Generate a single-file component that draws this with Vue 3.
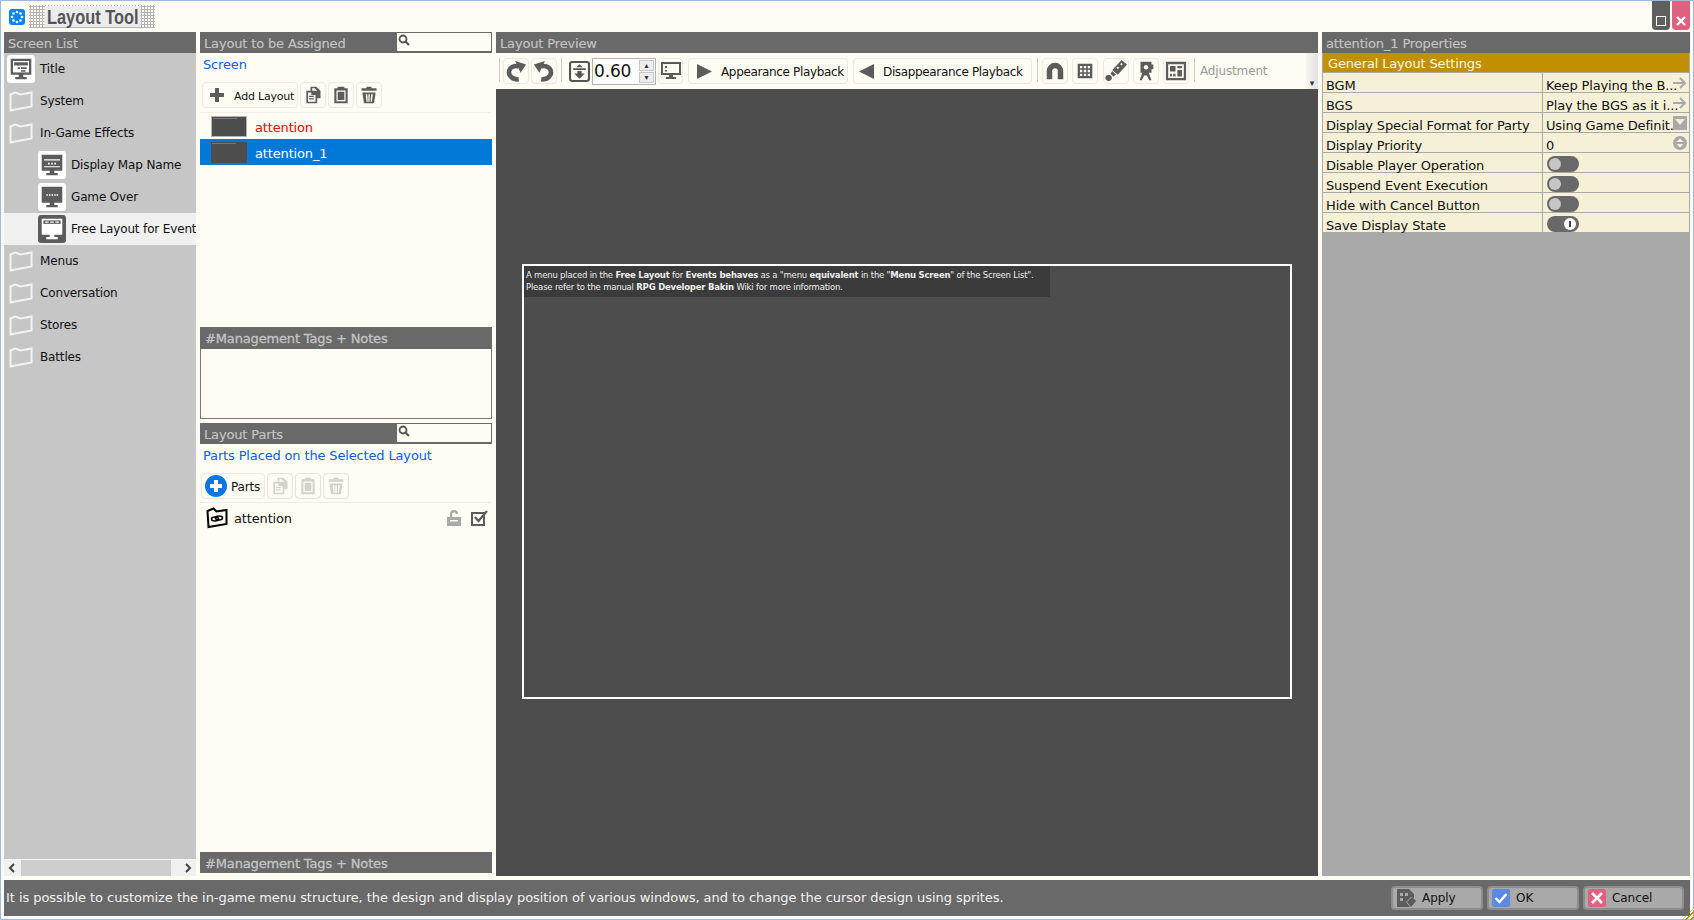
<script setup>
// Layout Tool window: screen list, layouts, preview, properties
const mon = 'M3 3h18v14h-7v2h3v2H7v-2h3v-2H3z'
const icons = {
  copy: 'M9 2h7l5 5v9h-4v6H4V7h5zM11 4v3h6v0l-3-3zM6 9v11h9V12h-5V9zM7 13h6v1.500H7zM7 16h6v1.500H7z',
  paste: 'M8 2h8v2h4v18H4V4h4zM6.500 6.500v13h11v-13z M8 8h8v10H8z',
  trash: 'M9 2h6v2h6v3H3V4h6zM4 9h16l-2 13H6zM8 11l1 9h1.500l-.5-9zM11.200 11v9h1.600v-9zM14.500 11l-.5 9h1.500l1-9z',
  magnet: 'M3 21V12a9 9 0 0 1 18 0v9h-6v-9a3 3 0 0 0-6 0v9z',
  grid: 'M4 4h16v16H4zM6.500 6.500v2.500H9V6.500zM10.700 6.500v2.500h2.600V6.500zM15 6.500v2.500h2.500V6.500zM6.500 10.700v2.600H9v-2.600zM10.700 10.700v2.600h2.600v-2.600zM15 10.700v2.600h2.500v-2.600zM6.500 15v2.500H9V15zM10.700 15v2.500h2.600V15zM15 15v2.500h2.500V15z',
  brush: 'M18 0l6 5-10 11-6-5zM18 3l-1.500 1.500 1.500 1.500 1.500-1.500zM14 7l-1.500 1.500 1.500 1.500 1.500-1.500zM8 12l4 4-3 2-3-3zM4 16a3.500 3.500 0 1 1-.1 0z',
  cam: 'M6 2h12v3h2v5h-2v4h-3l3 8h-2.500l-2.500-5h-3l-2.500 5H5l3-8H6zM12 5.500a2.500 2.500 0 1 0 .1 0z',
  layout: 'M1 2h22v20H1zM3.500 4.500v15h17v-15zM5.500 6.500h6v6h-6zM13.500 6.500h5v2.500h-5zM13.500 11h5v7h-5zM5.500 15h2v3h-2zM9 15h2.500v3H9z',
}
const screens = [
  { name: 'Title', kind: 'title' },
  { name: 'System', kind: 'folder' },
  { name: 'In-Game Effects', kind: 'folder' },
  { name: 'Display Map Name', kind: 'map', sub: true },
  { name: 'Game Over', kind: 'over', sub: true },
  { name: 'Free Layout for Events', kind: 'free', sub: true, active: true },
  { name: 'Menus', kind: 'folder' },
  { name: 'Conversation', kind: 'folder' },
  { name: 'Stores', kind: 'folder' },
  { name: 'Battles', kind: 'folder' },
]
const props = [
  { label: 'BGM', value: 'Keep Playing the B...', icon: 'arrow' },
  { label: 'BGS', value: 'Play the BGS as it i...', icon: 'arrow' },
  { label: 'Display Special Format for Party', value: 'Using Game Definit...', icon: 'drop' },
  { label: 'Display Priority', value: '0', icon: 'spin' },
  { label: 'Disable Player Operation', toggle: 'off' },
  { label: 'Suspend Event Execution', toggle: 'off' },
  { label: 'Hide with Cancel Button', toggle: 'off' },
  { label: 'Save Display State', toggle: 'on' },
]
</script>

<template>
  <div class="app">
    <header class="titlebar">
      <svg class="logo" viewBox="0 0 16 16">
        <rect width="16" height="16" rx="3" fill="#0a84f0" />
        <g fill="#fff">
          <circle cx="8" cy="3" r="1.300" /><circle cx="8" cy="13" r="1.300" />
          <circle cx="3" cy="8" r="1.300" /><circle cx="13" cy="8" r="1.300" />
          <circle cx="4.500" cy="4.500" r="1.300" /><circle cx="11.500" cy="4.500" r="1.300" />
          <circle cx="4.500" cy="11.500" r="1.300" /><circle cx="11.500" cy="11.500" r="1.300" />
        </g>
      </svg>
      <div class="app-title"><span>Layout Tool</span></div>
      <div class="win-btns">
        <div class="win-btn max"><i></i></div>
        <div class="win-btn close">
          <svg viewBox="0 0 10 10" width="10" height="10"><path d="M1 1l8 8M9 1l-8 8" stroke="#fff" stroke-width="2.400" /></svg>
        </div>
      </div>
    </header>

    <main class="main">
      <section class="col-screens">
        <div class="head">Screen List</div>
        <div class="screen-list">
          <div v-for="s in screens" :key="s.name" class="screen" :class="{ sub: s.sub, active: s.active, top: s.kind === 'title' }">
            <svg v-if="s.kind === 'folder'" class="folder" viewBox="0 0 24 22">
              <path d="M1.500 4.500l5-2 5 2 11-2v14l-11 2-10 2z" fill="none" stroke="#f2f2f2" stroke-width="2" />
            </svg>
            <div v-else class="mon-box" :class="{ dark: s.active }">
              <svg viewBox="1.500 1.500 21 21" width="24" height="24">
                <path :d="mon" :fill="s.active ? '#fff' : '#5c5c5c'" />
                <template v-if="s.kind === 'title'">
                  <path d="M5 5h14v10H5z" fill="#fff" /><path d="M6 6h12v3H6zM9 10.500h2v1.500H9zM12 10.500h5v1.500h-5zM12 13h4v1.500h-4z" fill="#5c5c5c" />
                </template>
                <template v-else-if="s.kind === 'map'">
                  <path d="M5 7h14v1H5zM5 13h14v1H5z" fill="#fff" /><path d="M8.500 10h1.500v1.500H8.500zM11.300 10h1.500v1.500h-1.500zM14 10h1.500v1.500H14z" fill="#fff" />
                </template>
                <template v-else-if="s.kind === 'over'">
                  <path d="M7 9.500h1.300v1.300H7zM9.300 9.500h1.300v1.300H9.300zM11.600 9.500h1.300v1.300h-1.300zM13.900 9.500h1.300v1.300h-1.300zM16 9.500h1.300v1.300H16z" fill="#fff" />
                </template>
                <template v-else>
                  <path d="M4.500 4.500h15v3h-15z" fill="#5c5c5c" /><path d="M6 5.500h3v1H6zM10.500 5.500h3v1h-3zM15 5.500h3v1h-3z" fill="#fff" />
                </template>
              </svg>
            </div>
            <span class="screen-name">{{ s.name }}</span>
          </div>
        </div>
        <div class="hscroll">
          <svg viewBox="0 0 8 10" width="8" height="10"><path d="M6 1L2 5l4 4" fill="none" stroke="#444" stroke-width="2" /></svg>
          <div class="hthumb"></div>
          <svg viewBox="0 0 8 10" width="8" height="10"><path d="M2 1l4 4-4 4" fill="none" stroke="#444" stroke-width="2" /></svg>
        </div>
      </section>

      <section class="col-layouts">
        <div class="head search-head">
          <span>Layout to be Assigned</span>
          <div class="search">
            <svg viewBox="0 0 12 12" width="12" height="12"><circle cx="5" cy="5" r="3.500" fill="none" stroke="#555" stroke-width="1.800" /><path d="M7.500 7.500l3.500 3.500" stroke="#555" stroke-width="2.200" /></svg>
          </div>
        </div>
        <div class="blue-label">Screen</div>
        <div class="tools">
          <button class="btn add">
            <svg viewBox="0 0 14 14" width="14" height="14"><path d="M5 0h4v5h5v4H9v5H5V9H0V5h5z" fill="#5c5c5c" /></svg>
            <span>Add Layout</span>
          </button>
          <button class="btn sq"><svg viewBox="0 0 24 24" width="20" height="20"><path :d="icons.copy" fill="#5c5c5c" fill-rule="evenodd" /></svg></button>
          <button class="btn sq"><svg viewBox="0 0 24 24" width="20" height="20"><path :d="icons.paste" fill="#5c5c5c" fill-rule="evenodd" /></svg></button>
          <button class="btn sq"><svg viewBox="0 0 24 24" width="20" height="20"><path :d="icons.trash" fill="#5c5c5c" fill-rule="evenodd" /></svg></button>
        </div>
        <div class="layout-list">
          <div class="layout-row"><div class="thumb light"></div><span class="red">attention</span></div>
          <div class="layout-row selected"><div class="thumb"></div><span>attention_1</span></div>
        </div>
        <div class="head tall">#Management Tags + Notes</div>
        <div class="notes"></div>

        <div class="head search-head parts-head">
          <span>Layout Parts</span>
          <div class="search">
            <svg viewBox="0 0 12 12" width="12" height="12"><circle cx="5" cy="5" r="3.500" fill="none" stroke="#555" stroke-width="1.800" /><path d="M7.500 7.500l3.500 3.500" stroke="#555" stroke-width="2.200" /></svg>
          </div>
        </div>
        <div class="blue-label">Parts Placed on the Selected Layout</div>
        <div class="tools parts-tools">
          <button class="btn parts">
            <svg viewBox="0 0 22 22" width="22" height="22"><circle cx="11" cy="11" r="11" fill="#0a78e0" /><path d="M9 5h4v4h4v4h-4v4H9v-4H5V9h4z" fill="#fff" /></svg>
            <span>Parts</span>
          </button>
          <button class="btn sq off"><svg viewBox="0 0 24 24" width="20" height="20"><path :d="icons.copy" fill="#d4d2ca" fill-rule="evenodd" /></svg></button>
          <button class="btn sq off"><svg viewBox="0 0 24 24" width="20" height="20"><path :d="icons.paste" fill="#d4d2ca" fill-rule="evenodd" /></svg></button>
          <button class="btn sq off"><svg viewBox="0 0 24 24" width="20" height="20"><path :d="icons.trash" fill="#d4d2ca" fill-rule="evenodd" /></svg></button>
        </div>
        <div class="parts-list">
          <div class="part-row">
            <svg viewBox="0 0 22 22" width="22" height="22">
              <path d="M1.500 4l6-2.500 3 3 10-1.500v14l-18 3z" fill="none" stroke="#000" stroke-width="2" />
              <ellipse cx="9" cy="12" rx="3.500" ry="2" fill="none" stroke="#000" stroke-width="1.600" />
              <ellipse cx="13" cy="11" rx="3.500" ry="2" fill="none" stroke="#000" stroke-width="1.600" />
            </svg>
            <span class="part-name">attention</span>
            <svg class="lock" viewBox="0 0 14 16" width="14" height="16"><path d="M3 7V4a4 4 0 0 1 8 0h-2.200a1.800 1.800 0 0 0-3.600 0v3H14v9H0V7zM3 10v1.500h8V10z" fill="#a9a9a9" fill-rule="evenodd" /></svg>
            <svg viewBox="0 0 18 16" width="18" height="16"><path d="M1 3h12v12H1z" fill="none" stroke="#5c5c5c" stroke-width="2" /><path d="M4 7l3.500 4L16 1" fill="none" stroke="#5c5c5c" stroke-width="2.200" /></svg>
          </div>
        </div>
        <div class="head bottom-tags">#Management Tags + Notes</div>
      </section>

      <section class="col-preview">
        <div class="head">Layout Preview</div>
        <div class="pv-tools">
          <i class="sep first"></i>
          <button class="btn sq hist">
            <svg viewBox="0 0 24 24" width="22" height="22"><path d="M15 21C6 22 2 14 6 9c2-2 6-3 9-2" fill="none" stroke="#5c5c5c" stroke-width="5" /><path d="M11 1l12 4-6 9z" fill="#5c5c5c" /></svg>
          </button>
          <button class="btn sq hist flip">
            <svg viewBox="0 0 24 24" width="22" height="22"><path d="M15 21C6 22 2 14 6 9c2-2 6-3 9-2" fill="none" stroke="#5c5c5c" stroke-width="5" /><path d="M11 1l12 4-6 9z" fill="#5c5c5c" /></svg>
          </button>
          <i class="sep"></i>
          <div class="fit">
            <svg viewBox="0 0 20 20" width="21" height="21"><rect x="1" y="1" width="18" height="18" rx="2" fill="none" stroke="#555" stroke-width="2" /><path d="M10 3l3 3H7zM4 7h12v1.500H4zM8 9.500h4V12h3l-5 5-5-5h3z" fill="#555" /></svg>
          </div>
          <div class="zoom-input">
            <span>0.60</span>
            <div class="spin"><b>▴</b><b>▾</b></div>
          </div>
          <button class="btn sq mon-btn">
            <svg viewBox="0 0 20 18" width="20" height="18"><path d="M1 1h18v11H1z" fill="none" stroke="#5c5c5c" stroke-width="2" /><path d="M4 4h2v2H4zM4 8h2v1.500H4zM8 13h4v2h3v2H5v-2h3z" fill="#5c5c5c" /></svg>
          </button>
          <button class="btn play">
            <svg viewBox="0 0 14 14" width="15" height="15"><path d="M0 0l14 7-14 7z" fill="#5c5c5c" /></svg>
            <span>Appearance Playback</span>
          </button>
          <button class="btn play dis">
            <svg viewBox="0 0 14 14" width="15" height="15"><path d="M14 0L0 7l14 7z" fill="#5c5c5c" /></svg>
            <span>Disappearance Playback</span>
          </button>
          <i class="sep mid"></i>
          <div class="pv-group">
            <button class="btn sq" v-for="k in ['magnet', 'grid', 'brush', 'cam', 'layout']" :key="k">
              <svg viewBox="0 0 24 24" width="22" height="22"><path :d="icons[k]" fill="#5c5c5c" fill-rule="evenodd" /></svg>
            </button>
          </div>
          <i class="sep mid"></i>
          <span class="adjust">Adjustment</span>
          <div class="overflow"><b>▾</b></div>
        </div>
        <div class="stage">
          <div class="frame">
            <div class="note">
              A menu placed in the <b>Free Layout</b> for <b>Events behaves</b> as a "menu <b>equivalent</b> in the "<b>Menu Screen</b>" of the Screen List".<br />
              Please refer to the manual <b>RPG Developer Bakin</b> Wiki for more information.
            </div>
          </div>
        </div>
      </section>

      <section class="col-props">
        <div class="head">attention_1 Properties</div>
        <div class="gold">General Layout Settings</div>
        <div class="prop" v-for="p in props" :key="p.label">
          <div class="prop-label">{{ p.label }}</div>
          <div class="prop-value">
            <span v-if="p.value">{{ p.value }}</span>
            <svg v-if="p.icon === 'arrow'" class="pi" viewBox="0 0 14 14" width="14" height="14"><path d="M0 7h12M7 2l5 5-5 5" fill="none" stroke="#a9a9a9" stroke-width="2" /></svg>
            <svg v-if="p.icon === 'drop'" class="pi" viewBox="0 0 14 14" width="14" height="14"><path d="M0 0h14v14H0z" fill="#a9a9a9" /><path d="M2 3h10L7 9z" fill="#f5f0d6" /></svg>
            <svg v-if="p.icon === 'spin'" class="pi" viewBox="0 0 14 14" width="14" height="14"><circle cx="7" cy="7" r="7" fill="#a9a9a9" /><path d="M3.500 6L7 2.500 10.500 6zM3.500 8L7 11.500 10.500 8z" fill="#f5f0d6" /></svg>
            <div v-if="p.toggle" class="toggle" :class="p.toggle"><i></i></div>
          </div>
        </div>
        <div class="props-fill"></div>
      </section>
    </main>

    <footer class="status">
      <div class="status-text">It is possible to customize the in-game menu structure, the design and display position of various windows, and to change the cursor design using sprites.</div>
      <button class="foot-btn">
        <svg viewBox="0 0 20 20" width="20" height="20"><path d="M1 1h12l5 5v4l-3-1-5 5 4 5H1z" fill="#5c5c5c" /><path d="M4 5h3v3H4zM9 5h3v3H9zM4 10h3v3H4z" fill="#a9a9a9" /><path d="M11 14l5-5 4 4-5 6z" fill="#5c5c5c" /></svg>
        <span>Apply</span>
      </button>
      <button class="foot-btn">
        <svg viewBox="0 0 18 18" width="18" height="18"><rect width="18" height="18" rx="2" fill="#5c8ae0" /><path d="M3.500 9l4 4 7-8" fill="none" stroke="#fff" stroke-width="2.400" /></svg>
        <span>OK</span>
      </button>
      <button class="foot-btn cancel">
        <svg viewBox="0 0 18 18" width="18" height="18"><rect width="18" height="18" rx="2" fill="#e0607f" /><path d="M4 4l10 10M14 4L4 14" stroke="#fff" stroke-width="2.600" /></svg>
        <span>Cancel</span>
      </button>
    </footer>
    <div class="grip"></div>
  </div>
</template>

<style>
html, body { margin: 0; background: #fffcf3; overflow: hidden; }
</style>

<style scoped>
.app {
  position: relative; box-sizing: border-box; width: 1694px; height: 920px;
  display: flex; flex-direction: column; padding: 0 3px 3px;
  background: #fffcf3; border: 1px solid #9fbad6;
  font: 12px "DejaVu Sans", sans-serif; color: #111; letter-spacing: -0.15px;
}
button { font: inherit; color: inherit; padding: 0; letter-spacing: inherit; white-space: nowrap; }

.titlebar { height: 31px; flex: none; display: flex; align-items: center; position: relative; }
.logo { width: 16px; height: 16px; margin: 0 4px 0 5px; }
.app-title {
  width: 126px; height: 23px; display: flex; align-items: center; justify-content: center;
  background: radial-gradient(circle at 1.500px 1.500px, #b4b4b4 1px, transparent 1.300px) 0 0 / 3px 3px;
}
.app-title span {
  font: bold 21px "Liberation Sans", sans-serif; letter-spacing: 0; color: #555;
  background: #ececec; padding: 0 3px; line-height: 21px; display: block;
  transform: scaleX(0.78); margin-left: 2px;
}
.win-btns { margin-left: auto; align-self: flex-start; display: flex; gap: 2px; }
.win-btn { width: 18px; height: 29px; border-radius: 0 0 4px 4px; display: flex; align-items: flex-end; justify-content: center; padding-bottom: 4px; box-sizing: border-box; }
.max { background: #5f5f5f; }
.max i { width: 8px; height: 8px; border: 1px solid #fff; display: block; }
.close { background: #e0607f; }

.main { flex: 1; min-height: 0; display: flex; gap: 4px; }
section { display: flex; flex-direction: column; min-height: 0; }
.head {
  height: 21px; flex: none; box-sizing: border-box; background: #696969; color: #c4c4c4;
  font-size: 13px; line-height: 23px; padding-left: 4px; white-space: nowrap;
  -webkit-text-stroke: 0.15px #c4c4c4;
}
.head.tall, .bottom-tags { padding-left: 5px; -webkit-text-stroke: 0.3px #c4c4c4; }
.head.tall { height: 22px; }
.bottom-tags { margin-bottom: 3px; }

.col-screens { width: 192px; background: #c6c6c6; }
.screen-list { flex: 1; overflow: hidden; }
.screen { height: 32px; display: flex; align-items: center; padding-left: 5px; white-space: nowrap; overflow: hidden; }
.screen.top { padding-left: 3px; }
.screen.sub { padding-left: 34px; }
.screen.active { background: #f0f0f0; }
.folder { width: 24px; height: 22px; flex: none; margin-right: 7px; }
.mon-box { width: 28px; height: 28px; flex: none; background: #fff; border-radius: 3px; display: flex; align-items: center; justify-content: center; margin-right: 5px; }
.mon-box.dark { background: #5c5c5c; }
.screen-name { color: #111; }
.hscroll { height: 16px; flex: none; display: flex; align-items: center; background: #f0f0f0; border-top: 1px solid #f5f5f5; padding-left: 4px; }
.hthumb { width: 150px; height: 100%; background: #cdcdcd; margin: 0 13px 0 5px; }

.col-layouts { width: 292px; }
.search-head { display: flex; justify-content: space-between; }
.search {
  width: 94px; box-sizing: border-box; height: 18px; margin-top: 1px; margin-right: 1px;
  background: #fffcf3; padding: 1px 0 0 1px; display: flex; align-items: flex-start;
}
.blue-label { height: 22px; flex: none; line-height: 24px; font-size: 13px; color: #0a5fe0; padding-left: 3px; }
.tools {
  height: 38px; flex: none; box-sizing: border-box; display: flex; gap: 2px; padding: 7px 0 4px 2px;
  border-bottom: 1px solid #f0eee4; margin-right: 1px;
}
.btn {
  height: 26px; box-sizing: border-box; background: #fffcf3; border: 1px solid #eceadf; border-radius: 4px;
  display: flex; align-items: center; justify-content: center; flex: none;
}
.btn span { position: relative; top: 1px; }
.sq { width: 26px; }
.add { width: 96px; justify-content: flex-start; padding-left: 7px; gap: 10px; font-size: 11px; letter-spacing: -0.2px; }
.layout-list { height: 214px; flex: none; }
.layout-row { height: 26px; display: flex; align-items: center; padding-left: 11px; font-size: 13px; }
.layout-row span { position: relative; top: 1px; }
.thumb { width: 36px; height: 21px; background: linear-gradient(#777, #777) 1px 1px / 24px 1px no-repeat #4d4d4d; margin-right: 8px; }
.thumb.light { border: 1px solid #b5b5b5; box-sizing: border-box; }
.red { color: #f00; }
.selected { background: #0078d7; color: #fff; }
.notes { height: 70px; flex: none; box-sizing: border-box; border: 1px solid #777; border-top: 0; margin-bottom: 4px; background: #fffcf3; }
.parts-tools { padding-left: 1px; height: 37px; padding-top: 7px; }
.parts { width: 64px; justify-content: flex-start; padding-left: 3px; gap: 4px; }
.off { border-color: #e6e4da; }
.parts-list { flex: 1; min-height: 0; }
.part-row { height: 30px; display: flex; align-items: center; padding-left: 6px; font-size: 13px; }
.part-name { margin-left: 6px; flex: 1; }
.lock { margin-right: 10px; }
.part-row svg:last-child { margin-right: 3px; }

.col-preview { width: 822px; }
.pv-tools { height: 36px; flex: none; display: flex; align-items: flex-start; padding: 5px 0 0 3px; box-sizing: border-box; position: relative; }
.sep { width: 1px; height: 24px; background: #cfcdc4; margin: 0 3px 0 2px; flex: none; }
.sep.first { margin-left: 0; }
.sep.mid { margin: 0 4px 0 5px; }
.hist { margin-right: 2px; }
.flip svg { transform: scaleX(-1); }
.fit { width: 25px; height: 26px; display: flex; align-items: center; justify-content: center; flex: none; margin-left: 2px; }
.zoom-input {
  width: 64px; height: 27px; box-sizing: border-box; border: 1px solid #b4b4b4; background: #fff;
  display: flex; justify-content: space-between; font-size: 17px; line-height: 25px; padding-left: 1px; flex: none;
}
.spin { width: 15px; margin: 1px; display: flex; flex-direction: column; gap: 1px; }
.spin b { flex: 1; background: #ededed; border: 1px solid #c8c8c8; font-size: 8px; line-height: 9px; text-align: center; color: #333; font-weight: normal; }
.mon-btn { margin: 0 5px 0 2px; width: 25px; }
.play { justify-content: flex-start; padding-left: 8px; gap: 9px; width: 160px; letter-spacing: -0.35px; }
.dis { width: 179px; margin-left: 5px; padding-left: 5px; }
.pv-group { display: flex; gap: 4.250px; }
.adjust { color: #9a9a9a; line-height: 26px; margin-left: 1px; }
.overflow { position: absolute; right: 0; top: 0; bottom: 0; width: 12px; background: linear-gradient(90deg, #f7f5ee, #e2e2e0); display: flex; align-items: flex-end; justify-content: center; }
.overflow b { font-size: 9px; line-height: 12px; color: #333; }
.stage { flex: 1; background: #4d4d4d; display: flex; align-items: center; justify-content: center; }
.frame { width: 770px; height: 435px; box-sizing: border-box; border: 2px solid #fff; margin-top: -3px; }
.note {
  width: 526px; height: 31px; box-sizing: border-box; background: #3b3b3b; color: #eee;
  font: 8.500px/12px "DejaVu Sans", sans-serif; letter-spacing: -0.2px; padding: 3px 0 0 2px; white-space: nowrap;
}

.col-props { width: 368px; background: #a9a9a9; }
.gold { height: 20px; flex: none; box-sizing: border-box; background: #c28f00; color: #fff8e0; font-size: 13px; line-height: 21px; padding-left: 5px; border: 1px solid #a9a9a9; border-top: 0; }
.prop { height: 20px; flex: none; box-sizing: border-box; display: flex; background: #f5f0d6; border-bottom: 1px solid #a9a9a9; border-left: 1px solid #a9a9a9; border-right: 1px solid #a9a9a9; font-size: 13px; line-height: 25px; }
.prop-label { width: 220px; flex: none; box-sizing: border-box; padding-left: 3px; border-right: 1px solid #a9a9a9; white-space: nowrap; }
.prop-value { flex: 1; padding-left: 3px; position: relative; white-space: nowrap; overflow: hidden; }
.pi { position: absolute; right: 2px; top: 3px; }
.toggle { width: 32px; height: 16px; border-radius: 8px; background: #696969; margin: 3px 0 0 1px; position: relative; }
.toggle i { position: absolute; top: 2px; left: 2px; width: 12px; height: 12px; border-radius: 50%; background: #c6c6c6; }
.toggle.on i { left: auto; right: 3px; background: #fff; }
.toggle.on i::after { content: ''; position: absolute; left: 5px; top: 3px; width: 2px; height: 6px; background: #444; }
.props-fill { flex: 1; }

.status { height: 36px; flex: none; margin-top: 4px; background: #696969; display: flex; align-items: center; padding: 0 6px 0 2px; gap: 4px; color: #f2f2f2; letter-spacing: -0.06px; }
.status-text { flex: 1; font-size: 13px; white-space: nowrap; position: relative; top: -1px; }
.foot-btn {
  width: 92px; height: 24px; box-sizing: border-box; background: #a9a9a9; border: 2px solid #8d8d8d; border-radius: 4px;
  display: flex; align-items: center; padding-left: 3px; gap: 6px; color: #111; flex: none;
}
.foot-btn.cancel { width: 101px; }
.grip {
  position: absolute; right: -1px; bottom: -1px; width: 12px; height: 12px;
  background: repeating-linear-gradient(135deg, #c28f00 0 1.500px, transparent 1.500px 3.500px);
  clip-path: polygon(100% 0, 100% 100%, 0 100%);
}
</style>
